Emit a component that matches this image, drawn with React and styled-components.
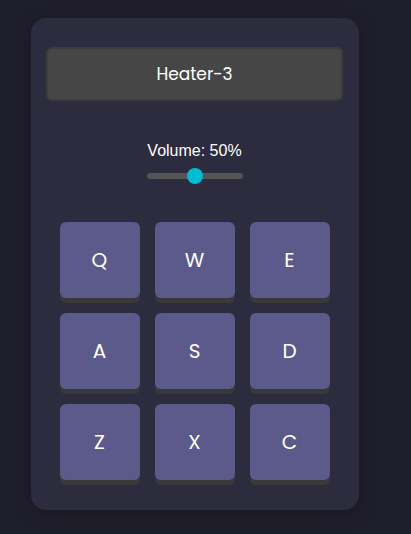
import React, { useState } from 'react';
import styled, { createGlobalStyle } from 'styled-components';

const GlobalStyle = createGlobalStyle`
  html, body {
    margin: 0;
    padding: 0;
    background: #1f1e2b;
    min-height: 100%;
  }
  body {
    font-family: 'Inter', 'Liberation Sans', sans-serif;
  }
`;

const Pagina = styled.div`
  min-height: 534px;
  padding: 18px 0 0 31px;
  box-sizing: border-box;
`;

const Maquina = styled.div`
  width: 328px;
  box-sizing: border-box;
  padding: 29px 16px 30px 15px;
  background: #2d2b3e;
  border-radius: 15px;
  box-shadow: 0 4px 20px rgba(0, 0, 0, 0.25);
  display: flex;
  flex-direction: column;
  align-items: center;
`;

const Visor = styled.div`
  width: 100%;
  height: 54px;
  box-sizing: border-box;
  background: #464646;
  border: 2px solid #3c3c3c;
  border-radius: 6px;
  display: flex;
  align-items: center;
  justify-content: center;
  color: #ffffff;
  font-family: 'Poppins', 'Inter', sans-serif;
  font-size: 17px;
`;

const Volume = styled.div`
  margin-top: 41px;
  display: flex;
  flex-direction: column;
  align-items: center;
  gap: 8px;
`;

const Rotulo = styled.label`
  color: #ffffff;
  font-family: 'Liberation Sans', Arial, sans-serif;
  font-size: 16px;
  line-height: 18px;
`;

const Deslizador = styled.input`
  -webkit-appearance: none;
  appearance: none;
  width: 96px;
  height: 16px;
  margin: 0;
  background: transparent;
  cursor: pointer;

  &::-webkit-slider-runnable-track {
    height: 6px;
    border-radius: 3px;
    background: #555555;
  }
  &::-webkit-slider-thumb {
    -webkit-appearance: none;
    width: 16px;
    height: 16px;
    margin-top: -5px;
    border-radius: 50%;
    background: #00bcd4;
    border: none;
  }
  &::-moz-range-track {
    height: 6px;
    border-radius: 3px;
    background: #555555;
  }
  &::-moz-range-thumb {
    width: 16px;
    height: 16px;
    border-radius: 50%;
    background: #00bcd4;
    border: none;
  }
`;

const Teclado = styled.div`
  margin-top: 38px;
  display: grid;
  grid-template-columns: repeat(3, 80px);
  grid-auto-rows: 76px;
  gap: 15px;
`;

const Tecla = styled.button`
  border: none;
  border-radius: 6px;
  background: ${props => (props.$ativa ? '#7a79b3' : '#5b5a8a')};
  box-shadow: 0 5px 0 #393939;
  color: #ffffff;
  font-family: 'Poppins', 'Inter', sans-serif;
  font-size: 20px;
  cursor: pointer;
  display: flex;
  align-items: center;
  justify-content: center;
`;

const teclas = ['Q', 'W', 'E', 'A', 'S', 'D', 'Z', 'X', 'C'];

const App = () => {
  const [volume, setVolume] = useState(50);
  const [ativa, setAtiva] = useState(null);

  return (
    <Pagina>
      <GlobalStyle />
      <Maquina>
        <Visor>Heater-3</Visor>
        <Volume>
          <Rotulo htmlFor="volume">Volume: {volume}%</Rotulo>
          <Deslizador
            id="volume"
            type="range"
            min="0"
            max="100"
            value={volume}
            onChange={e => setVolume(Number(e.target.value))}
          />
        </Volume>
        <Teclado>
          {teclas.map(tecla => (
            <Tecla
              key={tecla}
              $ativa={ativa === tecla}
              onMouseDown={() => setAtiva(tecla)}
              onMouseUp={() => setAtiva(null)}
            >
              {tecla}
            </Tecla>
          ))}
        </Teclado>
      </Maquina>
    </Pagina>
  );
};

export default App;
